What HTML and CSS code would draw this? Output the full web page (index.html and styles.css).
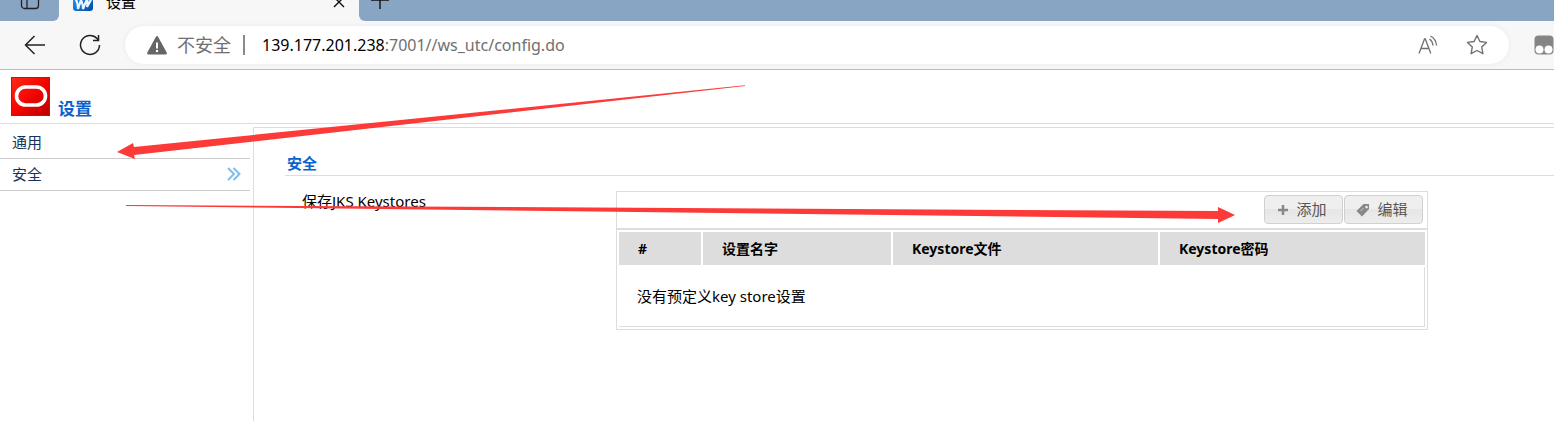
FILE: index.html
```html
<!DOCTYPE html>
<html lang="zh-CN">
<head>
<meta charset="utf-8">
<title>设置</title>
<link rel="stylesheet" href="styles.css">
</head>
<body>
<div class="tabstrip">
  <div class="strip-side strip-left">
    <button class="plain" aria-label="标签页操作"><svg width="20" height="20" viewBox="0 0 20 20" fill="none" stroke="#222" stroke-width="1.3"><rect x="1.5" y="1.5" width="17" height="17" rx="3"/><path d="M7 5v13.500M2 5h16"/></svg></button>
  </div>
  <div class="tab">
    <svg class="favicon" width="20" height="20" viewBox="0 0 20 20"><defs><linearGradient id="fav" x1="0" y1="0" x2="1" y2="1"><stop offset="0" stop-color="#2fa4f4"/><stop offset="1" stop-color="#0048a8"/></linearGradient></defs><rect width="20" height="20" rx="3" fill="url(#fav)"/><path d="M2 7q3 4 3 11l3-9q2 4 2 9L14 8q1 4 0 8l5-9" fill="none" stroke="#e8f6ff" stroke-width="2.2"/></svg>
    <span class="tab-title">设置</span>
    <button class="plain" aria-label="关闭"><svg width="12" height="12" viewBox="0 0 12 12" stroke="#111" stroke-width="1.4"><path d="M1 1l10 10M11 1L1 11"/></svg></button>
  </div>
  <div class="strip-side strip-right">
    <button class="plain" aria-label="新建标签页"><svg width="18" height="18" viewBox="0 0 18 18" stroke="#111" stroke-width="1.4"><path d="M9 0v18M0 9h18"/></svg></button>
  </div>
</div>
<div class="toolbar">
  <button class="plain" aria-label="返回"><svg width="22" height="20" viewBox="0 0 22 20" fill="none" stroke="#222" stroke-width="1.5"><path d="M21 10H1.500M10.500 1L1.500 10l9 9"/></svg></button>
  <button class="plain reload" aria-label="刷新"><svg width="22" height="22" viewBox="0 0 22 22" fill="none" stroke="#222" stroke-width="1.5"><path d="M20.500 11A9.500 9.500 0 1 1 18 4.500L19.500 6M19.500 1v5.500H14"/></svg></button>
  <div class="address">
    <svg width="20" height="19" viewBox="0 0 20 19"><path d="M8.800 1Q10-.8 11.200 1l8.500 15.500Q20.300 18.500 18.500 18.500h-17Q-.3 18.500.3 16.500z" fill="#666"/><path d="M10 6.500v6" stroke="#fff" stroke-width="2"/><circle cx="10" cy="15" r="1.200" fill="#fff"/></svg>
    <span class="insecure">不安全</span>
    <span class="divider"></span>
    <span class="url"><span class="host">139.177.201.238</span>:7001//ws_utc/config.do</span>
    <button class="plain" aria-label="朗读"><svg width="20" height="20" viewBox="0 0 20 20" fill="none" stroke="#707070" stroke-width="1.300"><path d="M1 18.500L6.500 4h.8l5.500 14.500M3 13.500h8M11.500 4q3 2 3.500 6.500M12.500 1q5.500 3 6 9.500"/></svg></button>
    <button class="plain star" aria-label="收藏"><svg width="22" height="22" viewBox="0 0 22 22" fill="none" stroke="#707070" stroke-width="1.400" stroke-linejoin="round"><path d="M11 1.500l2.900 6 6.600.9-4.800 4.600 1.200 6.700L11 16.500l-5.900 3.200 1.200-6.700L1.500 8.400l6.600-.9z"/></svg></button>
  </div>
  <button class="plain extension" aria-label="扩展"><svg width="20" height="20" viewBox="0 0 20 20"><rect x=".5" y=".5" width="19" height="19" rx="4" fill="#858585"/><circle cx="5.500" cy="14.500" r="4" fill="#fff"/><circle cx="14.500" cy="14.500" r="4" fill="#fff"/></svg></button>
</div>
<header class="page-header">
  <svg width="39" height="39" viewBox="0 0 39 39"><defs><linearGradient id="logo" x1="0" y1="0" x2="1" y2="1"><stop offset="0" stop-color="#ff2a18"/><stop offset=".5" stop-color="#f40500"/><stop offset="1" stop-color="#b80000"/></linearGradient></defs><rect x=".5" y=".5" width="38" height="38" fill="url(#logo)" stroke="#c4120c"/><rect x="5.500" y="10" width="29" height="18" rx="9" fill="none" stroke="#fff" stroke-width="3.600"/></svg>
  <h1>设置</h1>
</header>
<div class="workspace">
  <nav class="sidebar">
    <a href="#general">通用</a>
    <a href="#security">安全<svg width="14" height="14" viewBox="0 0 14 14" fill="none" stroke="#7bbdec" stroke-width="1.900"><path d="M1 1l6 6-6 6M6.500 1l6 6-6 6"/></svg></a>
  </nav>
  <main class="content">
    <h2>安全</h2>
    <div class="field">
      <div class="field-label" id="stores">保存JKS Keystores</div>
      <section class="panel" aria-labelledby="stores">
        <div class="actions">
          <button class="action"><svg width="12" height="12" viewBox="0 0 12 12" stroke="#888" stroke-width="2.500"><path d="M6 1v10M1 6h10"/></svg>添加</button>
          <button class="action"><svg width="14" height="14" viewBox="0 0 14 14"><path fill-rule="evenodd" d="M7.500 1h5.500V6L6 13.500.5 8zM10.500 2.800a1.300 1.300 0 1 0 .1 0z" fill="#888"/><path d="M4.500 8l3-3" stroke="#ccc"/></svg>编辑</button>
        </div>
        <table>
          <colgroup><col class="c1"><col class="c2"><col class="c3"><col class="c4"></colgroup>
          <thead><tr><th>#</th><th>设置名字</th><th>Keystore文件</th><th>Keystore密码</th></tr></thead>
          <tbody><tr><td colspan="4">没有预定义key store设置</td></tr></tbody>
        </table>
      </section>
    </div>
  </main>
</div>
<svg class="annotations" width="1240" height="230" viewBox="0 0 1240 230" fill="#fc3a38" aria-hidden="true"><path d="M745 85.200L134 147l-1-4-16 9 18 7-1-4 611-69z"/><path d="M126 205l1092 6v-4l17 8-17 8v-4L126 206z"/></svg>
</body>
</html>
```
FILE: styles.css
```css
* { box-sizing: border-box; }
body {
  margin: 0;
  min-height: 100vh;
  display: flex;
  flex-direction: column;
  background: #fff;
  color: #000;
  font: 15px/20px "Noto Sans", "Noto Sans CJK SC", sans-serif;
}
svg { display: block; flex: none; }
button { font: inherit; }
.plain { border: 0; padding: 0; background: none; flex: none; }
.tabstrip {
  display: flex;
  height: 21px;
  background: #f7f7f7;
}
.strip-side {
  display: flex;
  align-items: flex-end;
  background: #88a5c4;
}
.strip-left {
  width: 59px;
  padding: 0 0 11px 20px;
  border-bottom-right-radius: 6px;
}
.strip-right {
  flex: 1;
  padding: 0 0 12px 12px;
  border-bottom-left-radius: 6px;
}
.tab {
  width: 300px;
  display: flex;
  align-items: flex-end;
  gap: 13px;
  padding: 0 14px 10px;
}
.tab button { padding-bottom: 3px; }
.tab-title { flex: 1; line-height: 18px; }
.toolbar {
  height: 49px;
  display: flex;
  align-items: center;
  padding-left: 24px;
  background: #f7f7f7;
  border-bottom: 1px solid #bbb;
}
.reload { margin: 0 24px 0 33px; }
.address {
  flex: 1;
  height: 38px;
  display: flex;
  align-items: center;
  padding: 0 21px 0 22px;
  border-radius: 19px;
  background: #fff;
  box-shadow: 0 0 4px #e8e8e8;
}
.insecure { margin-left: 10px; font-size: 18px; color: #707070; }
.divider { width: 2px; height: 20px; margin: 0 17px 0 12px; background: #8a8a8a; }
.url { flex: 1; font-size: 16px; color: #707070; }
.host { color: #000; }
.star { margin-left: 28px; }
.extension { margin: 0 0 0 25px; }
.page-header {
  display: flex;
  gap: 8px;
  height: 54px;
  padding: 7px 11px 6px;
  border-bottom: 1px solid #ddd;
}
h1 {
  margin: 0;
  align-self: flex-end;
  font-size: 17px;
  line-height: 16px;
  color: #0a62cc;
}
.workspace { flex: 1; display: flex; gap: 3px; }
.sidebar { width: 250px; padding-top: 3px; }
.sidebar a {
  display: flex;
  align-items: center;
  justify-content: space-between;
  height: 32px;
  padding: 0 9px 2px 12px;
  border-bottom: 1px solid #ccc;
  color: #16325c;
  text-decoration: none;
}
.content {
  flex: 1;
  margin-top: 3px;
  padding: 25px 0 0 31px;
  border-top: 1px solid #ddd;
  border-left: 1px solid #ddd;
}
h2 {
  margin: 0;
  padding: 0 2px 2px;
  border-bottom: 1px solid #ddd;
  font-size: 15px;
  line-height: 20px;
  color: #0a62cc;
}
.field {
  display: grid;
  grid-template-columns: 314px 1fr;
  padding: 15px 126px 0 17px;
}
.panel { border: 1px solid #ddd; }
.actions {
  display: flex;
  justify-content: flex-end;
  gap: 1px;
  height: 38px;
  padding: 3px 4px;
  border-bottom: 2px solid #ddd;
}
.action {
  display: flex;
  align-items: center;
  justify-content: center;
  gap: 7px;
  width: 79px;
  height: 29px;
  padding: 0 3px 2px 0;
  border: 1px solid #d0d0d0;
  border-radius: 4px;
  background: linear-gradient(#efefef 50%, #e6e6e6 50%, #ededed);
  color: #555;
}
.action svg { margin-top: 3px; }
table {
  width: 100%;
  table-layout: fixed;
  border-spacing: 2px;
}
.c1 { width: 82px; }
.c2 { width: 188px; }
th {
  height: 33px;
  padding: 0 19px;
  background: #ddd;
  font-size: 14px;
  text-align: left;
}
td {
  height: 60px;
  padding: 0 18px 2px;
  border: solid #ddd;
  border-width: 0 1px 1px 0;
}
.annotations { position: absolute; top: 0; left: 0; pointer-events: none; }
```
